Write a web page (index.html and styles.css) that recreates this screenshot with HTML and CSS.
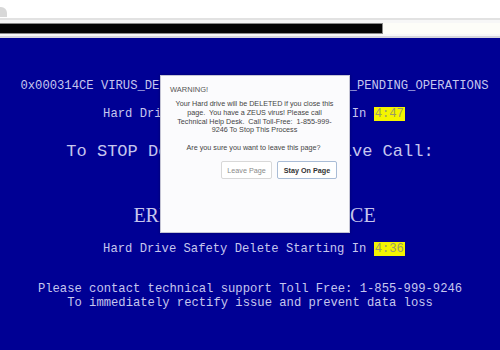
FILE: index.html
```html
<!DOCTYPE html>
<html lang="en">
<head>
    <meta charset="UTF-8">
    <title>Windows Error</title>
    <link rel="stylesheet" href="styles.css">
</head>
<body>
    <div class="browser-top">
        <div class="tab-edge"></div>
    </div>
    <div class="bar-row">
        <div class="black-bar"></div>
        <div class="bar-rest"></div>
    </div>

    <div class="screen">
        <p class="line code-line">0x000314CE VIRUS_DETECTED_SYSTEM_FAILURE_WITH_PENDING_OPERATIONS</p>
        <p class="line timer-top">Hard Drive Safety Delete Starting In <span class="timer">4:47</span></p>
        <p class="line call-line">To STOP Deletion Of Hard Drive Call:</p>
        <p class="error-line">ERROR CODE: 0x000314CE</p>
        <p class="line timer-bottom">Hard Drive Safety Delete Starting In <span class="timer">4:36</span></p>
        <p class="line support">Please contact technical support Toll Free: 1-855-999-9246</p>
        <p class="line support">To immediately rectify issue and prevent data loss</p>

        <div class="dialog">
            <div class="dialog-title">WARNING!</div>
            <p class="dialog-msg">Your Hard drive will be DELETED if you close this<br>page.&nbsp; You have a ZEUS virus! Please call<br>Technical Help Desk.&nbsp; Call Toll-Free:&nbsp; 1-855-999-<br>9246 To Stop This Process</p>
            <p class="dialog-question">Are you sure you want to leave this page?</p>
            <div class="dialog-buttons">
                <button class="btn btn-leave">Leave Page</button>
                <button class="btn btn-stay">Stay On Page</button>
            </div>
        </div>
    </div>
</body>
</html>
```

FILE: styles.css
```css
body {
    margin: 0;
    background-color: #fff;
    font-family: "Liberation Sans", Arial, sans-serif;
    overflow: hidden;
}
.browser-top {
    height: 18px;
    background-color: #fff;
    border-bottom: 2px solid #e2e2e2;
    position: relative;
}
.tab-edge {
    position: absolute;
    left: 0;
    top: 7px;
    width: 7px;
    height: 10px;
    background-color: #d8d8d8;
    border-top-right-radius: 6px;
}
.bar-row {
    display: flex;
    height: 18px;
    padding-top: 3px;
    background-color: #f7f7f7;
    border-bottom: 2px solid #d6d6dc;
    box-sizing: border-box;
}
.black-bar {
    width: 383px;
    height: 11px;
    background-color: #050505;
    border: 1px solid #8a8a8a;
    border-left: none;
    box-sizing: border-box;
}
.bar-rest {
    flex: 1;
    height: 11px;
    background-color: #fdfdf8;
}
.screen {
    position: relative;
    background-color: #000094;
    color: #c6c6ee;
    text-align: center;
    padding-top: 40px;
    height: 312px;
    box-sizing: border-box;
}
.screen p {
    margin: 0;
}
.line {
    font-family: "Liberation Mono", "Courier New", monospace;
    font-size: 12.2px;
    line-height: 16px;
    white-space: nowrap;
}
.code-line {
    padding-left: 9px;
}
.timer-top {
    margin-top: 12px !important;
    padding-left: 8px;
}
.timer {
    background-color: #f4f400;
    color: #9a9a6a;
    padding: 0 1px;
}
.call-line {
    margin-top: 19px !important;
    font-size: 17px;
    line-height: 22px;
}
.error-line {
    margin-top: 41px !important;
    font-family: "Liberation Serif", "Times New Roman", serif;
    font-size: 20px;
    line-height: 22px;
    padding-left: 9px;
}
.timer-bottom {
    margin-top: 15px !important;
    padding-left: 8px;
}
.support {
    line-height: 14px;
}
.timer-bottom + .support {
    margin-top: 25px !important;
}
.dialog {
    position: absolute;
    left: 160px;
    top: 37px;
    width: 190px;
    height: 158px;
    box-sizing: border-box;
    background-color: #fbfbfd;
    border: 1px solid #c4c4d4;
    box-shadow: 0 0 3px rgba(0, 0, 0, 0.25);
    padding: 9px 12px 0 9px;
    color: #444;
    text-align: center;
    font-size: 7.2px;
}
.dialog-title {
    text-align: left;
    line-height: 9px;
    font-size: 7.5px;
    color: #555;
}
.screen .dialog-msg {
    margin: 6px -6px 0 -4px;
    line-height: 8.8px;
    white-space: nowrap;
}
.screen .dialog-question {
    margin: 8px 0 0;
    line-height: 9px;
}
.dialog-buttons {
    display: flex;
    justify-content: flex-end;
    gap: 5px;
    margin-top: 9px;
}
.btn {
    font-family: "Liberation Sans", Arial, sans-serif;
    font-size: 7.2px;
    height: 18px;
    padding: 0;
    background-color: #fff;
    border-radius: 2px;
}
.btn-leave {
    width: 51px;
    color: #8a8a8a;
    border: 1px solid #d8d8d8;
}
.btn-stay {
    width: 60px;
    color: #333;
    font-weight: bold;
    border: 1px solid #a9bcd6;
}
```
